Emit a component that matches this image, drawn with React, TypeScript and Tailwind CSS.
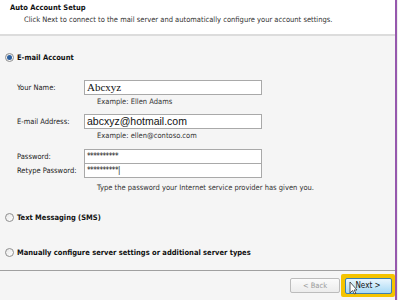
import React from "react";

const sans = "font-['Tahoma','DejaVu_Sans_Condensed','Liberation_Sans',sans-serif]";

function Radio({ checked }: { checked?: boolean }) {
  return (
    <span className="flex h-[9px] w-[9px] items-center justify-center rounded-full border border-[#8f8f8f] bg-gradient-to-br from-[#e8e8e8] to-white">
      {checked && <span className="h-[5px] w-[5px] rounded-full bg-[#2c5f9e]" />}
    </span>
  );
}

function Field({
  label,
  value,
  className,
  mt,
}: {
  label: string;
  value: string;
  className?: string;
  mt?: string;
}) {
  return (
    <div className={`flex items-center ${mt ?? ""}`}>
      <span className="w-[67px] text-[7.5px] text-[#222]">{label}</span>
      <div className="flex h-[15px] w-[178px] items-center border border-[#a9a9a9] bg-white px-[2px]">
        <span className={className}>{value}</span>
      </div>
    </div>
  );
}

export default function App() {
  return (
    <div className={`flex h-[300px] w-[400px] ${sans} text-[#111]`}>
      <div className="flex w-[397px] flex-col border-r-2 border-[#9658ad] bg-[#f5f5f5]">
        <div className="h-[34px] bg-white pl-[10px] pt-[2px]">
          <div className="text-[7.5px] font-bold leading-[12px]">Auto Account Setup</div>
          <div className="pl-[14px] text-[7.5px] leading-[12px] text-[#333]">
            Click Next to connect to the mail server and automatically configure your account settings.
          </div>
        </div>
        <div className="h-[2px] bg-[#dcdcdc]" />
        <div className="flex flex-1 flex-col pl-[5px]">
          <div className="mt-[16px] flex items-center gap-[3px]">
            <Radio checked />
            <span className="text-[7.5px] font-bold">E-mail Account</span>
          </div>
          <div className="mt-[17px] flex flex-col pl-[12px]">
            <Field
              label="Your Name:"
              value="Abcxyz"
              className="font-['Liberation_Serif',serif] text-[11px] leading-[13px]"
            />
            <div className="mt-[1px] pl-[80px] text-[7.5px] leading-[11px] text-[#333]">Example: Ellen Adams</div>
            <Field
              label="E-mail Address:"
              value="abcxyz@hotmail.com"
              mt="mt-[7px]"
              className="font-['Liberation_Sans',sans-serif] text-[10.5px] leading-[13px]"
            />
            <div className="mt-[1px] pl-[80px] text-[7.5px] leading-[11px] text-[#333]">Example: ellen@contoso.com</div>
            <Field
              label="Password:"
              value="**********"
              mt="mt-[8px]"
              className="text-[8px] leading-[10px] tracking-[-0.5px]"
            />
            <Field
              label="Retype Password:"
              value="**********|"
              mt="-mt-[1px]"
              className="text-[8px] leading-[10px] tracking-[-0.5px]"
            />
            <div className="mt-[4px] pl-[80px] text-[7.5px] leading-[11px] text-[#333]">
              Type the password your Internet service provider has given you.
            </div>
          </div>
          <div className="mt-[19px] flex items-center gap-[3px]">
            <Radio />
            <span className="text-[7.5px] font-bold">Text Messaging (SMS)</span>
          </div>
          <div className="mt-[23px] flex items-center gap-[3px]">
            <Radio />
            <span className="text-[7.5px] font-bold">Manually configure server settings or additional server types</span>
          </div>
        </div>
        <div className="h-[1px] bg-[#a0a0a0]" />
        <div className="flex h-[29px] items-center justify-end gap-[1px] pr-[0px]">
          <div className="flex h-[15px] w-[50px] items-center justify-center rounded-[2px] border border-[#bcbcbc] bg-gradient-to-b from-[#fbfbfb] to-[#ececec] text-[7.5px] text-[#9a9a9a]">
            &lt; Back
          </div>
          <div className="flex h-[23px] w-[54px] items-center justify-center rounded-[2px] bg-[#f5c400]">
            <div className="relative flex h-[16px] w-[47px] items-center justify-center rounded-[2px] border border-[#3c7fb1] bg-gradient-to-b from-[#eaf6fd] to-[#a7d9f5] text-[8px] text-[#111]">
              Next &gt;
              <svg className="absolute left-[3px] top-[2px]" width="9" height="14" viewBox="0 0 9 14">
                <path d="M1 1 L1 12 L3.5 9.5 L5.5 13 L7 12.3 L5 9 L8 9 Z" fill="white" stroke="#333" strokeWidth="0.8" />
              </svg>
            </div>
          </div>
        </div>
      </div>
      <div className="w-[1px] bg-[#eee]" />
    </div>
  );
}
